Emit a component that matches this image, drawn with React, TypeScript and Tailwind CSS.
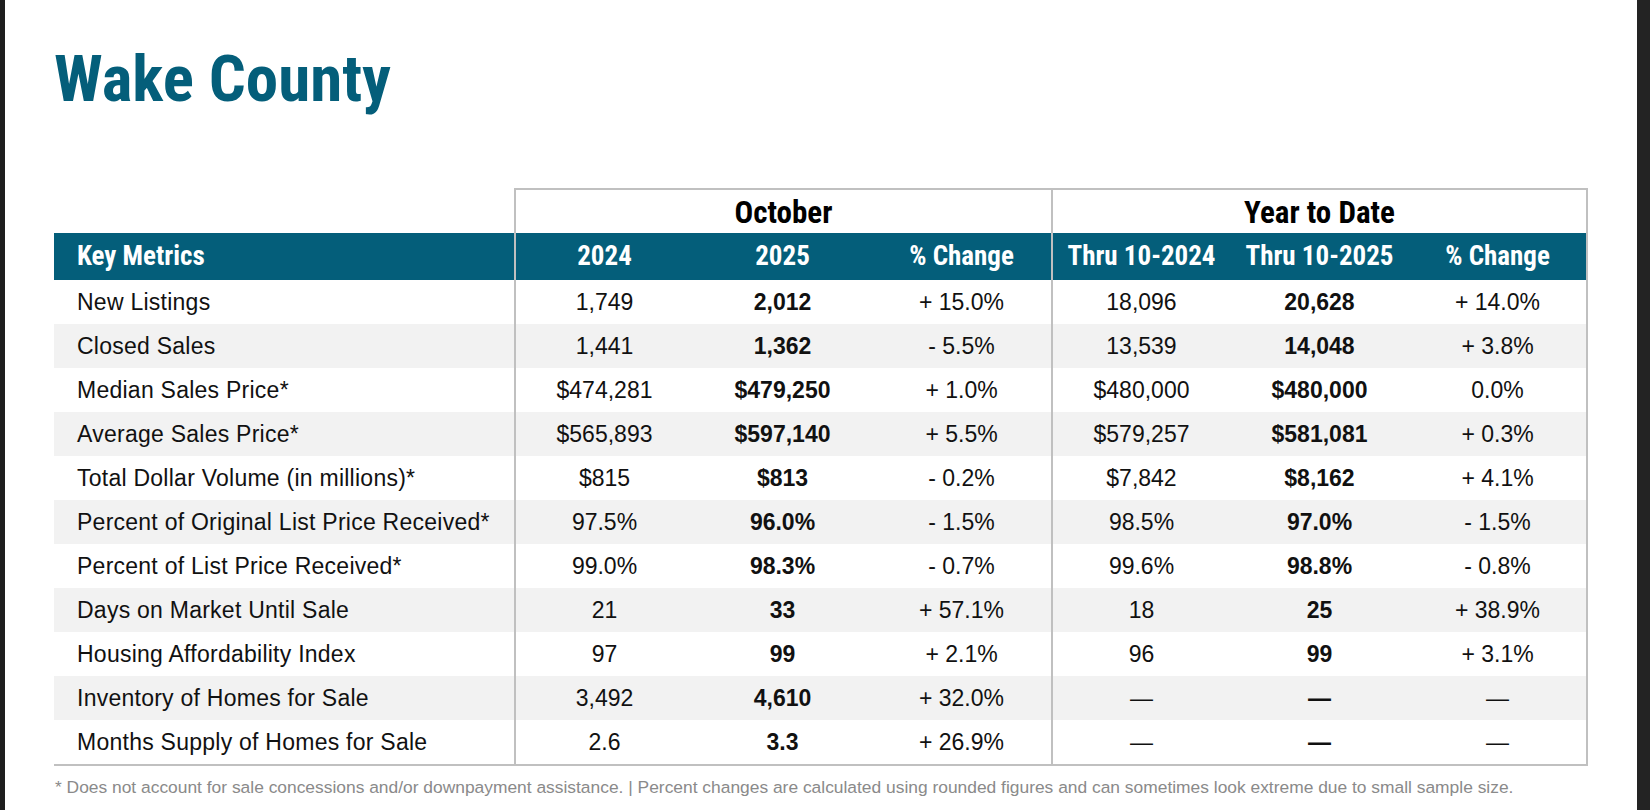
import React from "react";

type Row = {
  label: string;
  o24: string;
  o25: string;
  oc: string;
  y24: string;
  y25: string;
  yc: string;
};

const rows: Row[] = [
  { label: "New Listings", o24: "1,749", o25: "2,012", oc: "+ 15.0%", y24: "18,096", y25: "20,628", yc: "+ 14.0%" },
  { label: "Closed Sales", o24: "1,441", o25: "1,362", oc: "- 5.5%", y24: "13,539", y25: "14,048", yc: "+ 3.8%" },
  { label: "Median Sales Price*", o24: "$474,281", o25: "$479,250", oc: "+ 1.0%", y24: "$480,000", y25: "$480,000", yc: "0.0%" },
  { label: "Average Sales Price*", o24: "$565,893", o25: "$597,140", oc: "+ 5.5%", y24: "$579,257", y25: "$581,081", yc: "+ 0.3%" },
  { label: "Total Dollar Volume (in millions)*", o24: "$815", o25: "$813", oc: "- 0.2%", y24: "$7,842", y25: "$8,162", yc: "+ 4.1%" },
  { label: "Percent of Original List Price Received*", o24: "97.5%", o25: "96.0%", oc: "- 1.5%", y24: "98.5%", y25: "97.0%", yc: "- 1.5%" },
  { label: "Percent of List Price Received*", o24: "99.0%", o25: "98.3%", oc: "- 0.7%", y24: "99.6%", y25: "98.8%", yc: "- 0.8%" },
  { label: "Days on Market Until Sale", o24: "21", o25: "33", oc: "+ 57.1%", y24: "18", y25: "25", yc: "+ 38.9%" },
  { label: "Housing Affordability Index", o24: "97", o25: "99", oc: "+ 2.1%", y24: "96", y25: "99", yc: "+ 3.1%" },
  { label: "Inventory of Homes for Sale", o24: "3,492", o25: "4,610", oc: "+ 32.0%", y24: "\u2014", y25: "\u2014", yc: "\u2014" },
  { label: "Months Supply of Homes for Sale", o24: "2.6", o25: "3.3", oc: "+ 26.9%", y24: "\u2014", y25: "\u2014", yc: "\u2014" },
];

const grid = "grid grid-cols-[460px_179px_179px_179px_179px_179px_179px]";

export default function App() {
  return (
    <div className="flex min-h-[810px] w-[1650px] bg-white font-['Liberation_Sans',Arial,sans-serif]">
      <div className="w-[5px] shrink-0 bg-[#1e1e1e]" />
      <div className="flex-1 pl-[49px] pt-[47px]">
        <h1 className="font-['Roboto_Condensed','Roboto',sans-serif] text-[65px] font-bold leading-none text-[#045e7a]">
          Wake County
        </h1>

        <div className="mt-[76px] w-[1534px]">
          {/* group header */}
          <div className={`${grid} h-[45px]`}>
            <div />
            <div className="col-span-3 flex items-center justify-center border-l-2 border-t-2 border-[#c0c0c0] font-['Roboto_Condensed','Roboto',sans-serif] text-[31px] font-bold text-black">
              October
            </div>
            <div className="col-span-3 flex items-center justify-center border-l-2 border-r-2 border-t-2 border-[#c0c0c0] font-['Roboto_Condensed','Roboto',sans-serif] text-[31px] font-bold text-black">
              Year to Date
            </div>
          </div>

          {/* column header */}
          <div className={`${grid} h-[47px] bg-[#045e7a] font-['Roboto_Condensed','Roboto',sans-serif] text-[27px] font-bold text-white`}>
            <div className="flex items-center pl-[23px]">Key Metrics</div>
            <div className="flex items-center justify-center border-l-2 border-[#c0c0c0]">2024</div>
            <div className="flex items-center justify-center">2025</div>
            <div className="flex items-center justify-center">% Change</div>
            <div className="flex items-center justify-center border-l-2 border-[#c0c0c0]">Thru 10-2024</div>
            <div className="flex items-center justify-center">Thru 10-2025</div>
            <div className="flex items-center justify-center border-r-2 border-[#c0c0c0]">% Change</div>
          </div>

          {/* data rows */}
          <div className="border-b-2 border-[#c0c0c0]">
            {rows.map((r, i) => (
              <div
                key={r.label}
                className={`${grid} h-[44px] text-[23px] text-[#111] ${i % 2 === 1 ? "bg-[#f2f2f2]" : "bg-white"}`}
              >
                <div className="flex items-center pl-[23px] tracking-[0.25px]">{r.label}</div>
                <div className="flex items-center justify-center border-l-2 border-[#c0c0c0]">{r.o24}</div>
                <div className="flex items-center justify-center font-bold">{r.o25}</div>
                <div className="flex items-center justify-center">{r.oc}</div>
                <div className="flex items-center justify-center border-l-2 border-[#c0c0c0]">{r.y24}</div>
                <div className="flex items-center justify-center font-bold">{r.y25}</div>
                <div className="flex items-center justify-center border-r-2 border-[#c0c0c0]">{r.yc}</div>
              </div>
            ))}
          </div>

          <p className="mt-[10px] pl-[1px] text-[17.4px] leading-[22px] text-[#8a8a8a]">
            * Does not account for sale concessions and/or downpayment assistance. | Percent changes are calculated using rounded figures and can sometimes look extreme due to small sample size.
          </p>
        </div>
      </div>
      <div className="w-[13px] shrink-0 bg-[#232323]" />
    </div>
  );
}
